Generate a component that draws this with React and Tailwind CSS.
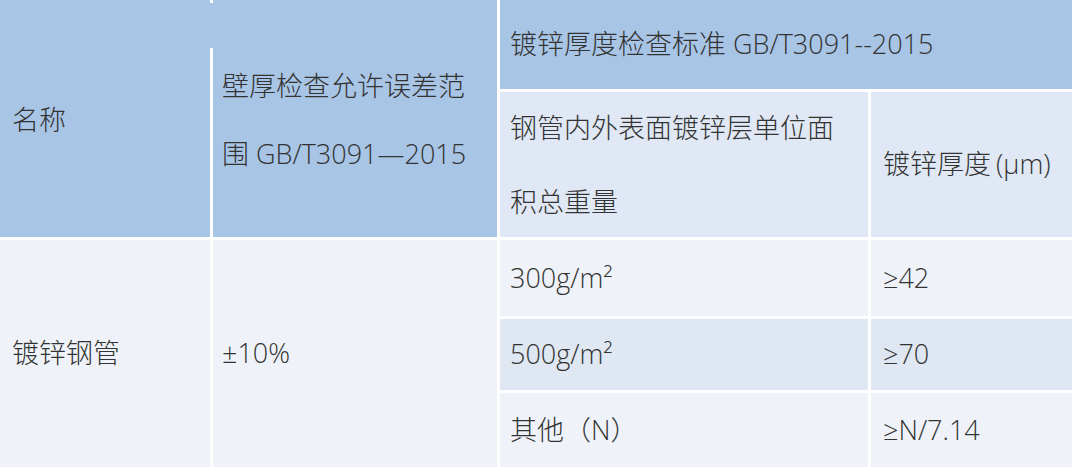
import React from 'react';

const font = { fontFamily: '"Open Sans", "Noto Sans", "Noto Sans CJK SC", sans-serif' };

function Cell({ className = '', children }) {
  return (
    <div className={`flex items-center whitespace-nowrap text-[27px] font-light text-[#333333] ${className}`}>
      {children}
    </div>
  );
}

export default function App() {
  return (
    <div className="w-[1080px] h-[467px] bg-white overflow-hidden" style={font}>
      <div className="relative grid grid-cols-[210px_284px_368px_201px] grid-rows-[89px_145px_76px_71px_74px] gap-[3px] w-[1072px]">
        {/* header */}
        <Cell className="row-span-2 bg-[#a8c5e5] pl-[12px] pt-[4px]">名称</Cell>
        <Cell className="row-span-2 bg-[#a8c5e5] pl-[9px] leading-[68px]">
          <div className="pt-[3px]">
            壁厚检查允许误差范
            <br />
            围 GB/T3091—2015
          </div>
        </Cell>
        <Cell className="col-span-2 bg-[#a8c5e5] pl-[10px]">镀锌厚度检查标准 GB/T3091--2015</Cell>
        <Cell className="bg-[#dfe8f4] pl-[10px] leading-[74px]">
          <div>
            钢管内外表面镀锌层单位面
            <br />
            积总重量
          </div>
        </Cell>
        <Cell className="bg-[#dfe8f4] pl-[12px]">
          镀锌厚度<span className="ml-[5px]">(μm)</span>
        </Cell>

        {/* body */}
        <Cell className="row-span-3 bg-[#eff3f9] pl-[12px]">镀锌钢管</Cell>
        <Cell className="row-span-3 bg-[#eff3f9] pl-[9px]">±10%</Cell>
        <Cell className="bg-[#eff3f9] pl-[10px]">300g/m²</Cell>
        <Cell className="bg-[#eff3f9] pl-[12px]">≥42</Cell>
        <Cell className="bg-[#dfe7f3] pl-[10px]">500g/m²</Cell>
        <Cell className="bg-[#dfe7f3] pl-[12px]">≥70</Cell>
        <Cell className="bg-[#eff3f9] pl-[10px]">其他（N）</Cell>
        <Cell className="bg-[#eff3f9] pl-[12px]">≥N/7.14</Cell>

        {/* break in the separator between the first two header cells */}
        <div className="absolute left-[210px] top-[3px] w-[3px] h-[45px] bg-[#a8c5e5]" />
      </div>
    </div>
  );
}
